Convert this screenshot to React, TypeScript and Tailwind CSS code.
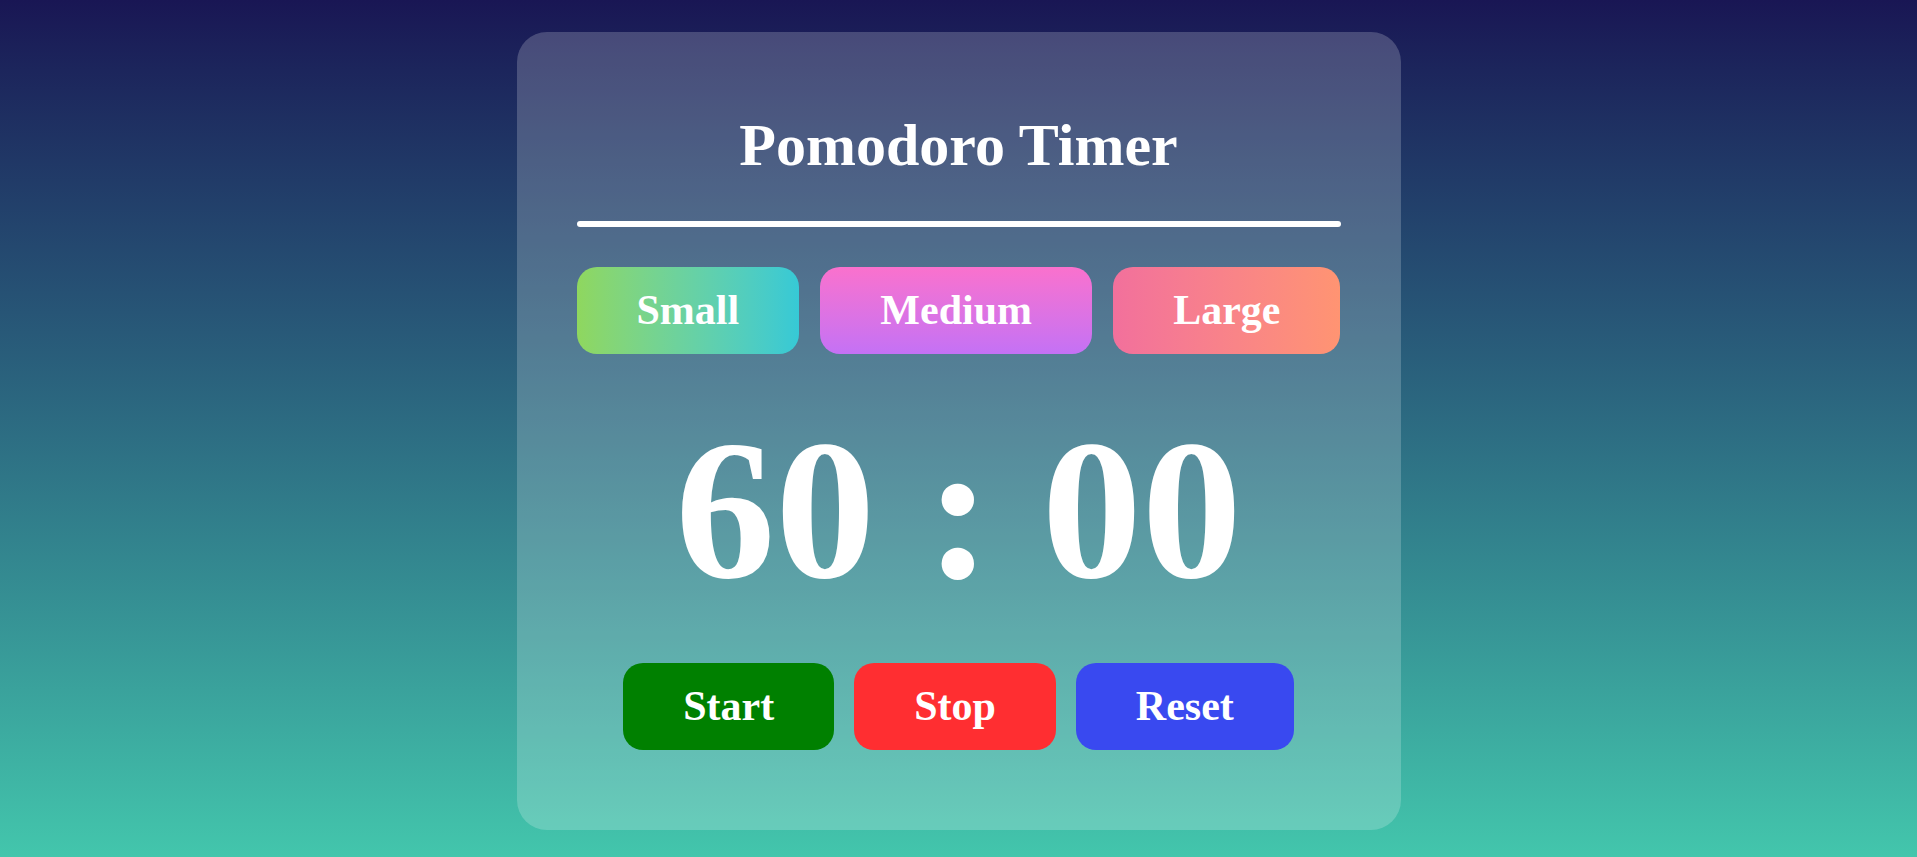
import { useEffect, useState } from 'react';

type Preset = {
  label: string;
  minutes: number;
  className: string;
};

const PRESETS: Preset[] = [
  { label: 'Small', minutes: 25, className: 'bg-gradient-to-r from-[#8fd75e] to-[#36c9d6]' },
  { label: 'Medium', minutes: 45, className: 'bg-gradient-to-t from-[#c471f5] to-[#fa71cd]' },
  { label: 'Large', minutes: 60, className: 'bg-gradient-to-r from-[#f2709c] to-[#ff9472]' },
];

const pad = (n: number) => n.toString().padStart(2, '0');

export default function App() {
  const [minutes, setMinutes] = useState(60);
  const [seconds, setSeconds] = useState(0);
  const [running, setRunning] = useState(false);

  useEffect(() => {
    if (!running) return;
    const id = setInterval(() => {
      setSeconds((s) => {
        if (s > 0) return s - 1;
        setMinutes((m) => {
          if (m === 0) {
            setRunning(false);
            return 0;
          }
          return m - 1;
        });
        return 59;
      });
    }, 1000);
    return () => clearInterval(id);
  }, [running]);

  const choosePreset = (m: number) => {
    setRunning(false);
    setMinutes(m);
    setSeconds(0);
  };

  const handleReset = () => {
    setRunning(false);
    setMinutes(60);
    setSeconds(0);
  };

  return (
    <div className="h-[857px] w-full overflow-hidden bg-gradient-to-b from-[#191654] to-[#43c6ac] pt-8 font-['Liberation_Serif','Times_New_Roman',serif] font-bold text-white">
      <div className="mx-auto flex w-[884px] flex-col rounded-[30px] bg-white/20 px-[60px] pt-20 pb-20">
        {/* Header */}
        <h1 className="text-center text-[60px] leading-[66px]">Pomodoro Timer</h1>
        <div className="mt-[43px] h-[6px] w-full rounded-full bg-white" />

        {/* Presets */}
        <div className="mt-10 flex justify-between">
          {PRESETS.map((p) => (
            <button
              key={p.label}
              onClick={() => choosePreset(p.minutes)}
              className={`${p.className} rounded-[20px] px-[60px] py-5 text-[42px] leading-[47px]`}
            >
              {p.label}
            </button>
          ))}
        </div>

        {/* Clock */}
        <div className="mt-[45px] text-center text-[200px] leading-[221px]">
          {pad(minutes)} : {pad(seconds)}
        </div>

        {/* Controls */}
        <div className="mt-[43px] flex justify-center gap-5">
          <button
            onClick={() => setRunning(true)}
            className="rounded-[20px] bg-[#008000] px-[60px] py-5 text-[42px] leading-[47px]"
          >
            Start
          </button>
          <button
            onClick={() => setRunning(false)}
            className="rounded-[20px] bg-[#ff2e31] px-[60px] py-5 text-[42px] leading-[47px]"
          >
            Stop
          </button>
          <button
            onClick={handleReset}
            className="rounded-[20px] bg-[#3949f0] px-[60px] py-5 text-[42px] leading-[47px]"
          >
            Reset
          </button>
        </div>
      </div>
    </div>
  );
}
